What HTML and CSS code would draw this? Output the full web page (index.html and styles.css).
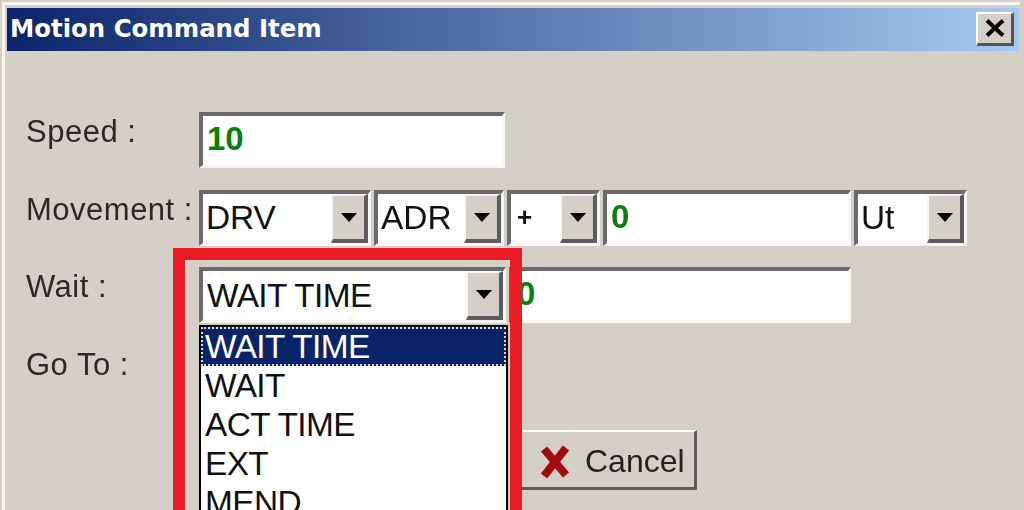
FILE: index.html
```html
<!DOCTYPE html>
<html lang="en">
<head>
    <meta charset="UTF-8">
    <meta name="viewport" content="width=device-width, initial-scale=1.0">
    <title>Motion Command Item</title>
    <link rel="stylesheet" href="styles.css">
</head>
<body>
    <div class="window">
        <div class="titlebar">
            <span class="title">Motion Command Item</span>
            <button class="close-button" type="button" aria-label="Close">
                <svg width="22" height="18" viewBox="0 0 22 18"><path d="M3 1.5 L19 16.5 M19 1.5 L3 16.5" stroke="#000" stroke-width="4" fill="none"/></svg>
            </button>
        </div>

        <div class="form">
            <div class="row row-speed">
                <label class="label">Speed :</label>
                <div class="input input-speed"><span class="value">10</span></div>
            </div>

            <div class="row row-movement">
                <label class="label">Movement :</label>
                <div class="combo combo-drv"><span class="combo-text">DRV</span><span class="arrow-button"><i class="arrow"></i></span></div>
                <div class="combo combo-adr"><span class="combo-text">ADR</span><span class="arrow-button"><i class="arrow"></i></span></div>
                <div class="combo combo-sign"><span class="combo-text combo-text-small">+</span><span class="arrow-button"><i class="arrow"></i></span></div>
                <div class="input input-move"><span class="value">0</span></div>
                <div class="combo combo-unit"><span class="combo-text">Ut</span><span class="arrow-button"><i class="arrow"></i></span></div>
            </div>

            <div class="row row-wait">
                <label class="label">Wait :</label>
                <div class="combo combo-wait">
                    <span class="combo-text">WAIT TIME</span><span class="arrow-button"><i class="arrow"></i></span>
                    <ul class="dropdown">
                        <li class="selected">WAIT TIME</li>
                        <li>WAIT</li>
                        <li>ACT TIME</li>
                        <li>EXT</li>
                        <li>MEND</li>
                    </ul>
                </div>
                <div class="input input-wait"><span class="value">0</span></div>
            </div>

            <div class="row row-goto">
                <label class="label">Go To :</label>
            </div>

            <div class="actions">
                <button class="cancel-button" type="button">
                    <svg width="34" height="36" viewBox="0 0 34 36"><path d="M6 5 L28 31 M28 4 L6 32" stroke="#a30a0a" stroke-width="8" fill="none"/></svg>
                    <span>Cancel</span>
                </button>
            </div>
        </div>

        <div class="highlight"></div>
    </div>
</body>
</html>
```

FILE: styles.css
```css
* {
    box-sizing: border-box;
}
html, body {
    margin: 0;
    height: 510px;
    overflow: hidden;
}
body {
    background: #d4d0c8;
    font-family: 'Liberation Sans', sans-serif;
    color: #111;
}
.window {
    position: relative;
    width: 1018px;
    height: 508px;
    margin: 2px 0 0 2px;
    padding: 3px 1px 0 2px;
    overflow: hidden;
    border-style: solid;
    border-color: #f6f5f2;
    border-width: 3px 0 0 3px;
    filter: blur(0.5px);
}
.titlebar {
    display: flex;
    align-items: center;
    justify-content: space-between;
    height: 43px;
    padding: 0 5px 2px 3px;
    background: linear-gradient(90deg, #0a246a 0%, #a6caf0 100%);
}
.title {
    color: #fff;
    font-family: 'DejaVu Sans', sans-serif;
    font-weight: bold;
    font-size: 24.4px;
}
.close-button {
    display: flex;
    align-items: center;
    justify-content: center;
    width: 38px;
    height: 34px;
    padding: 0;
    background: #d4d0c8;
    border-style: solid;
    border-width: 2px 3px 3px 2px;
    border-color: #fff #555 #555 #fff;
}
.form {
    padding: 61px 0 0 19px;
}
.row {
    display: flex;
    height: 56px;
    margin-bottom: 22px;
}
.label {
    flex: none;
    width: 173px;
    padding-top: 2px;
    font-size: 31px;
    letter-spacing: 0.5px;
    color: #2a2a2a;
}
.row-movement {
    margin-bottom: 0;
}
.row-wait {
    margin: 21px 0 0;
}
.row-goto {
    height: 60px;
    margin: 22px 0 0;
    align-items: flex-start;
}
.input, .combo {
    position: relative;
    display: flex;
    align-items: center;
    flex: none;
    height: 56px;
    margin-right: 3px;
    background: #fff;
    border-style: solid;
    border-width: 4px 3px 3px 4px;
    border-color: #6a6a6a #f7f7f5 #f7f7f5 #6a6a6a;
}
.combo {
    font-size: 33.4px;
    padding-left: 3px;
}
.combo-text {
    flex: 1;
    margin-top: -2px;
    white-space: nowrap;
}
.combo-text-small {
    font-size: 26px;
    font-weight: bold;
    padding-left: 3px;
}
.arrow-button {
    display: flex;
    align-items: center;
    justify-content: center;
    flex: none;
    width: 37px;
    height: 100%;
    background: #d4d0c8;
    border-style: solid;
    border-width: 2px 4px 4px 2px;
    border-color: #f7f7f5 #5c5c5c #5c5c5c #f7f7f5;
}
.arrow {
    width: 0;
    height: 0;
    border-style: solid;
    border-width: 9px 8px 0 8px;
    border-color: #000 transparent transparent transparent;
}
.value {
    padding-left: 4px;
    margin-top: -3px;
    color: #0a800a;
    font-weight: bold;
    font-size: 33px;
}
.input-speed {
    width: 306px;
}
.combo-drv {
    width: 172px;
}
.combo-adr {
    width: 130px;
}
.combo-sign {
    width: 93px;
}
.input-move {
    width: 248px;
}
.combo-unit {
    width: 113px;
}
.combo-wait {
    width: 307px;
    padding-left: 4px;
    letter-spacing: -0.6px;
}
.combo-wait .combo-text {
    margin-top: 0;
}
.input-wait {
    width: 342px;
}
.dropdown {
    position: absolute;
    top: 54px;
    left: -4px;
    z-index: 2;
    width: 309px;
    margin: 0;
    padding: 0;
    list-style: none;
    background: #fff;
    border: 2px solid #000;
    font-size: 33.4px;
}
.dropdown li {
    height: 39px;
    line-height: 39px;
    padding-left: 4px;
}
.dropdown .selected {
    background: #0a246a;
    color: #fff;
    outline: 2px dotted #ddd;
    outline-offset: -2px;
}
.actions {
    padding: 25px 0 0 496px;
}
.cancel-button {
    display: flex;
    align-items: center;
    gap: 13px;
    width: 175px;
    height: 60px;
    padding: 4px 0 0 16px;
    background: #d4d0c8;
    border-style: solid;
    border-width: 2px 3px 3px 0;
    border-color: #fff #5c5c5c #5c5c5c #fff;
    font-family: 'Liberation Sans', sans-serif;
    font-size: 32px;
    color: #222;
}
.highlight {
    position: absolute;
    top: 243px;
    left: 168px;
    z-index: 1;
    width: 349px;
    height: 300px;
    border: 12px solid #ed1c24;
}
```
